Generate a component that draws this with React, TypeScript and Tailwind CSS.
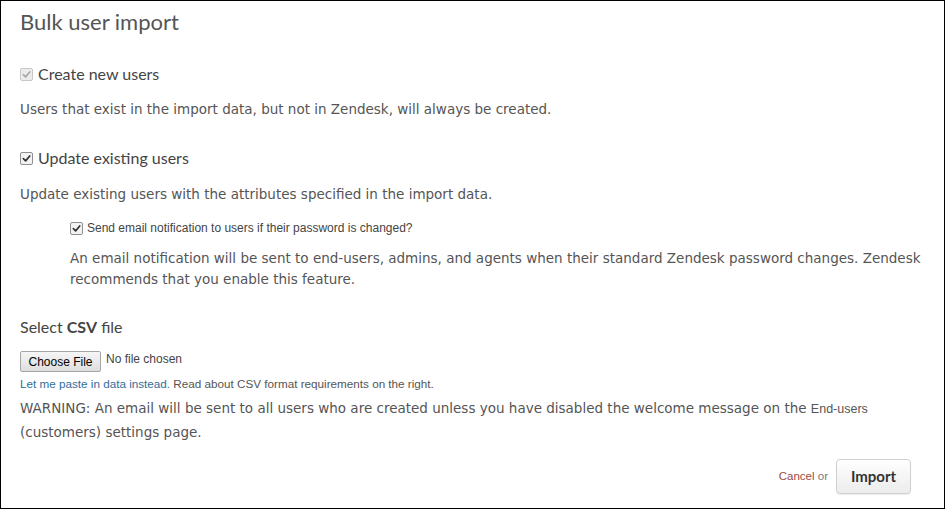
import React from "react";

function Check({ disabled }: { disabled?: boolean }) {
  return (
    <span
      className={
        "inline-flex h-[13px] w-[13px] shrink-0 items-center justify-center rounded-[2px] border " +
        (disabled ? "border-[#c8c8c8] bg-[#ececec]" : "border-[#8f8f8f] bg-[#f3f3f3]")
      }
    >
      <svg viewBox="0 0 10 10" className="h-[9px] w-[9px]">
        <path
          d="M1.5 5.2 L4 7.6 L8.6 2.2"
          fill="none"
          stroke={disabled ? "#a9a9a9" : "#333"}
          strokeWidth="1.9"
          strokeLinecap="round"
          strokeLinejoin="round"
        />
      </svg>
    </span>
  );
}

const body = "font-['DejaVu_Sans',sans-serif] text-[13.5px] text-[#555]";
const head = "font-['Lato',sans-serif] text-[16px] text-[#444]";
const small = "font-['Liberation_Sans',Arial,sans-serif]";

export default function App() {
  return (
    <div className="h-[509px] w-[945px] overflow-hidden border border-black bg-white pl-[19px] pt-[9px]">
      <h1 className="font-['Lato',sans-serif] text-[22px] leading-[24px] text-[#555]">Bulk user import</h1>

      <label className={`mt-[30px] flex h-[20px] items-center gap-[5px] leading-[20px] ${head}`}>
        <Check disabled />
        <span>Create new users</span>
      </label>
      <p className={`mt-[15px] leading-[20px] ${body}`}>
        Users that exist in the import data, but not in Zendesk, will always be created.
      </p>

      <label className={`mt-[29px] flex h-[20px] items-center gap-[5px] leading-[20px] ${head}`}>
        <Check />
        <span>Update existing users</span>
      </label>
      <p className={`mt-[16px] leading-[20px] ${body}`}>
        Update existing users with the attributes specified in the import data.
      </p>

      <div className="pl-[50px]">
        <label className={`mt-[16px] flex h-[16px] items-center gap-[4px] text-[12px] leading-[16px] text-[#444] ${small}`}>
          <Check />
          <span>Send email notification to users if their password is changed?</span>
        </label>
        <p className={`mt-[12px] pr-[10px] leading-[21px] ${body}`}>
          An email notification will be sent to end-users, admins, and agents when their standard Zendesk password
          changes. Zendesk recommends that you enable this feature.
        </p>
      </div>

      <div className={`mt-[27px] leading-[20px] ${head} text-[15px]`}>
        Select <span className="font-bold">CSV</span> file
      </div>

      <div className={`mt-[14px] flex items-start gap-[5px] ${small}`}>
        <button className="h-[21px] w-[81px] rounded-[2px] border border-[#a6a6a6] bg-gradient-to-b from-[#f6f6f6] to-[#dedede] text-[12px] text-black">
          Choose File
        </button>
        <span className="pt-[1px] text-[12px] leading-[14px] text-[#444]">No file chosen</span>
      </div>

      <p className={`mt-[5px] text-[11.7px] leading-[14px] text-[#555] ${small}`}>
        <a className="text-[#2f6f9a]">Let me paste in data instead.</a> Read about CSV format requirements on the right.
      </p>

      <p className={`mt-[5px] leading-[24px] ${body}`}>
        WARNING: An email will be sent to all users who are created unless you have disabled the welcome message on the{" "}
        <span className={`${small} text-[12.5px] leading-none`}>End-users</span> (customers) settings page.
      </p>

      <div className="mt-[15px] flex items-center justify-end gap-[8px] pr-[33px]">
        <span className={`text-[11.5px] text-[#777] ${small}`}>
          <a className="text-[#9c4a44]">Cancel</a> or
        </span>
        <button className="h-[35px] w-[75px] rounded-[4px] border border-[#d0d0d0] bg-gradient-to-b from-white to-[#ececec] font-['Lato',sans-serif] text-[15px] font-bold text-[#333] shadow-[0_1px_1px_rgba(0,0,0,0.08)]">
          Import
        </button>
      </div>
    </div>
  );
}
